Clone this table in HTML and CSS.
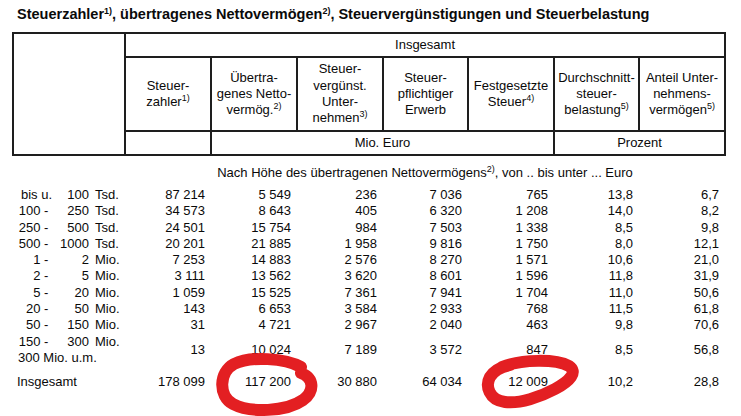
FILE: index.html
```html
<!DOCTYPE html>
<html lang="de">
<head>
<meta charset="utf-8">
<title>Steuerzahler</title>
<link rel="stylesheet" href="styles.css">
</head>
<body>
<h1 class="title">Steuerzahler<sup>1)</sup>, übertragenes Nettovermögen<sup>2)</sup>, Steuervergünstigungen und Steuerbelastung</h1>
<table class="tab">
  <colgroup>
    <col class="c-stub"><col class="c-n"><col class="c-n"><col class="c-n"><col class="c-n2"><col class="c-n"><col class="c-n2"><col class="c-n">
  </colgroup>
  <thead>
    <tr class="h1">
      <th class="stub" rowspan="3"></th>
      <th colspan="7">Insgesamt</th>
    </tr>
    <tr class="h2">
      <th>Steuer-<br>zahler<sup>1)</sup></th>
      <th>Übertra-<br>genes Netto-<br>vermög.<sup>2)</sup></th>
      <th>Steuer-<br>vergünst.<br>Unter-<br>nehmen<sup>3)</sup></th>
      <th>Steuer-<br>pflichtiger<br>Erwerb</th>
      <th>Festgesetzte<br>Steuer<sup>4)</sup></th>
      <th>Durchschnitt-<br>steuer-<br>belastung<sup>5)</sup></th>
      <th>Anteil Unter-<br>nehmens-<br>vermögen<sup>5)</sup></th>
    </tr>
    <tr class="h3">
      <th></th>
      <th colspan="4">Mio. Euro</th>
      <th colspan="2">Prozent</th>
    </tr>
  </thead>
  <tbody>
    <tr class="sub">
      <td></td>
      <td colspan="7">Nach Höhe des übertragenen Nettovermögens<sup>2)</sup>, von .. bis unter ... Euro</td>
    </tr>
    <tr><td class="lbl"><span class="lo">bis u.</span><span class="hi">100</span><span class="un">Tsd.</span></td><td>87 214</td><td>5 549</td><td>236</td><td>7 036</td><td>765</td><td>13,8</td><td>6,7</td></tr>
    <tr><td class="lbl"><span class="lo">100 -&nbsp;</span><span class="hi">250</span><span class="un">Tsd.</span></td><td>34 573</td><td>8 643</td><td>405</td><td>6 320</td><td>1 208</td><td>14,0</td><td>8,2</td></tr>
    <tr><td class="lbl"><span class="lo">250 -&nbsp;</span><span class="hi">500</span><span class="un">Tsd.</span></td><td>24 501</td><td>15 754</td><td>984</td><td>7 503</td><td>1 338</td><td>8,5</td><td>9,8</td></tr>
    <tr><td class="lbl"><span class="lo">500 -&nbsp;</span><span class="hi">1000</span><span class="un">Tsd.</span></td><td>20 201</td><td>21 885</td><td>1 958</td><td>9 816</td><td>1 750</td><td>8,0</td><td>12,1</td></tr>
    <tr><td class="lbl"><span class="lo">1 -&nbsp;</span><span class="hi">2</span><span class="un">Mio.</span></td><td>7 253</td><td>14 883</td><td>2 576</td><td>8 270</td><td>1 571</td><td>10,6</td><td>21,0</td></tr>
    <tr><td class="lbl"><span class="lo">2 -&nbsp;</span><span class="hi">5</span><span class="un">Mio.</span></td><td>3 111</td><td>13 562</td><td>3 620</td><td>8 601</td><td>1 596</td><td>11,8</td><td>31,9</td></tr>
    <tr><td class="lbl"><span class="lo">5 -&nbsp;</span><span class="hi">20</span><span class="un">Mio.</span></td><td>1 059</td><td>15 525</td><td>7 361</td><td>7 941</td><td>1 704</td><td>11,0</td><td>50,6</td></tr>
    <tr><td class="lbl"><span class="lo">20 -&nbsp;</span><span class="hi">50</span><span class="un">Mio.</span></td><td>143</td><td>6 653</td><td>3 584</td><td>2 933</td><td>768</td><td>11,5</td><td>61,8</td></tr>
    <tr><td class="lbl"><span class="lo">50 -&nbsp;</span><span class="hi">150</span><span class="un">Mio.</span></td><td>31</td><td>4 721</td><td>2 967</td><td>2 040</td><td>463</td><td>9,8</td><td>70,6</td></tr>
    <tr class="two"><td class="lbl"><span class="lo">150 -&nbsp;</span><span class="hi">300</span><span class="un">Mio.</span><br><span class="free">300 Mio. u.m.</span></td><td>13</td><td>10 024</td><td>7 189</td><td>3 572</td><td>847</td><td>8,5</td><td>56,8</td></tr>
    <tr class="total"><td class="lbl tot">Insgesamt</td><td>178 099</td><td>117 200</td><td>30 880</td><td>64 034</td><td>12 009</td><td>10,2</td><td>28,8</td></tr>
  </tbody>
</table>
<svg class="marks" width="741" height="416" viewBox="0 0 741 416" aria-hidden="true">
  <path d="M301,367 C285,358 250,356 234,364 C219,372 218,396 233,404 C250,413 286,412 303,400 C315,391 314,378 301,373" />
  <path d="M502,367 C522,359 556,359 569,366 C578,372 570,381 555,389 C540,397 520,404 505,402 C489,400 485,386 490,377 C494,370 501,367 510,365" />
</svg>
</body>
</html>
```
FILE: styles.css
```css
html, body {
  margin: 0;
  padding: 0;
  background: #ffffff;
}
body {
  font-family: "Liberation Sans", Arial, sans-serif;
  color: #0a0a0a;
  position: relative;
  width: 741px;
  height: 416px;
  overflow: hidden;
}
.title {
  font-size: 14.5px;
  font-weight: bold;
  margin: 0;
  padding: 5px 0 0 17px;
  line-height: 18px;
  height: 27px;
  box-sizing: border-box;
  white-space: nowrap;
}
.title sup {
  font-size: 9px;
  vertical-align: 5px;
  line-height: 0;
}
sup {
  font-size: 9px;
  vertical-align: 5px;
  line-height: 0;
}
.tab {
  margin: 5px 0 0 12px;
  border-collapse: collapse;
  table-layout: fixed;
  width: 712px;
  font-size: 13px;
}
.c-stub { width: 112px; }
.c-n { width: 86px; }
.c-n2 { width: 85px; }
.tab th {
  font-weight: normal;
  border: 2px solid #1e1e1e;
  padding: 0;
  text-align: center;
  vertical-align: middle;
  line-height: 16px;
}
.h1 th { height: 22px; }
.h2 th { height: 72px; line-height: 16.3px; }
.h3 th { height: 22px; }
.tab td {
  padding: 0 6px 0 0;
  text-align: right;
  line-height: 16.3px;
  white-space: nowrap;
}
.sub td {
  text-align: center;
  padding: 9px 0 6px 0;
  line-height: 16px;
}
.lbl {
  text-align: left !important;
  padding: 0 !important;
}
.lo {
  display: inline-block;
  width: 39px;
  text-align: right;
}
.hi {
  display: inline-block;
  width: 37px;
  text-align: right;
}
.un {
  display: inline-block;
  margin-left: 6px;
}
.free {
  display: inline-block;
  padding-left: 5px;
}
.two td { padding-top: 1px; }
.total td { padding-top: 8px; }
.tot { padding-left: 4px !important; padding-top: 8px !important; }
.marks {
  position: absolute;
  left: 0;
  top: 0;
  pointer-events: none;
}
.marks path {
  fill: none;
  stroke: #e31f22;
  stroke-width: 12;
  stroke-linecap: round;
  stroke-linejoin: round;
}
```
